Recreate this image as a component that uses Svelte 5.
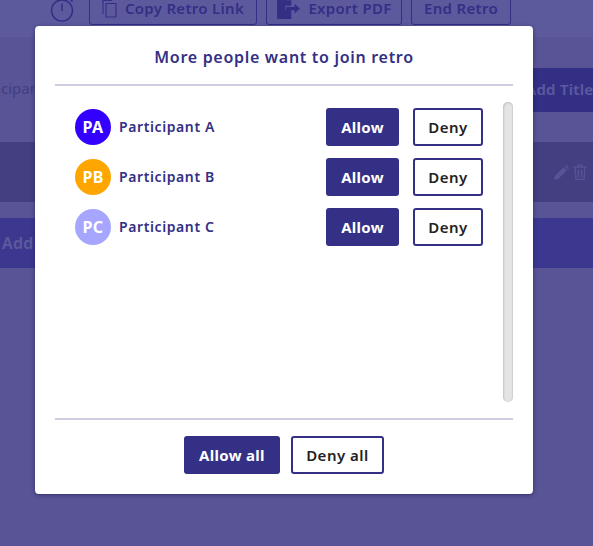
<script>
  const people = [
    { initials: 'PA', name: 'Participant A', color: '#3300ff' },
    { initials: 'PB', name: 'Participant B', color: '#ffa500' },
    { initials: 'PC', name: 'Participant C', color: '#a6a6ff' }
  ];
</script>

<div class="page">
  <header class="toolbar">
    <svg class="timer" width="24" height="24" viewBox="0 0 24 24" fill="none" stroke="#333085" stroke-width="1.5">
      <circle cx="12" cy="11.500" r="10.500" />
      <path d="M12 4.500v7.500M20.500 .5l2 2" />
    </svg>
    <div class="tool wide">
      <svg width="15" height="19" viewBox="0 0 15 19" fill="none" stroke="#333085" stroke-width="1.1">
        <path d="M1 15V1.500h9M4 4.500h10v13.500H4z" />
      </svg>
      Copy Retro Link
    </div>
    <div class="tool mid">
      <svg width="24" height="24" viewBox="0 0 22 22" fill="#333085">
        <path d="M1 0h8.500L14 4.500V9H8.500v4H14v8H1zM10 0v4h4zM9 10h8V7l5 4.500L17 16v-3H9z" />
      </svg>
      Export PDF
    </div>
    <div class="tool end">End Retro</div>
  </header>

  <section class="titlebar">
    <span class="participants">Participants</span>
    <span class="addtitle">Add Title</span>
  </section>

  <section class="darkrow">
    <svg width="15" height="15" viewBox="0 0 14 14" fill="#ffffff" fill-opacity="0.75">
      <path d="M0 14l1-4 8-8 3 3-8 8zM10 1l1-1 3 3-1 1z" />
    </svg>
    <svg width="14" height="16" viewBox="0 0 13 15" fill="none" stroke="#ffffff" stroke-opacity="0.75" stroke-width="1.2">
      <path d="M0 3h13M4.500 3V1h4v2M2 3l.7 11.400h7.600L11 3M5 5.500v7M8 5.500v7" />
    </svg>
  </section>

  <section class="addband"><span>Add Column</span></section>

  <div class="overlay">
    <div class="modal">
      <h2>More people want to join retro</h2>
      <hr />
      <div class="scroll">
        <ul>
          {#each people as p}
            <li>
              <span class="avatar" style="background:{p.color}">{p.initials}</span>
              <span class="name">{p.name}</span>
              <button class="allow">Allow</button>
              <button class="deny">Deny</button>
            </li>
          {/each}
        </ul>
        <div class="thumb"></div>
      </div>
      <hr />
      <div class="footer">
        <button class="allow all">Allow all</button>
        <button class="deny denyall">Deny all</button>
      </div>
    </div>
  </div>
</div>

<style>
  :global(body) {
    margin: 0;
    font-family: "Noto Sans", "Open Sans", sans-serif;
  }
  .page {
    position: relative;
    width: 593px;
    height: 546px;
    overflow: hidden;
    background: #ebe6da;
  }
  .toolbar {
    height: 37px;
    display: flex;
    align-items: flex-start;
    gap: 9px;
    box-sizing: border-box;
    padding-left: 50px;
    color: #333085;
    font-weight: 600;
    font-size: 15px;
    line-height: 15px;
    background: #fff;
  }
  .timer {
    margin: -1px 6px 0 0;
  }
  .tool {
    box-sizing: border-box;
    height: 35px;
    margin-top: -10px;
    padding-top: 1px;
    border: 1px solid #333085;
    border-radius: 3px;
    display: flex;
    align-items: center;
    justify-content: center;
    gap: 8px;
    letter-spacing: 0.3px;
  }
  .wide { width: 168px; }
  .mid { width: 136px; }
  .end { width: 100px; }
  .titlebar {
    height: 105px;
    position: relative;
    font-size: 15px;
  }
  .participants {
    position: absolute;
    left: -32px;
    top: 41px;
    color: #777;
  }
  .addtitle {
    position: absolute;
    right: 0;
    top: 31px;
    width: 73px;
    height: 44px;
    background: #333085;
    color: #fff;
    font-weight: 600;
    display: flex;
    align-items: center;
    padding-left: 6px;
    padding-bottom: 2px;
    box-sizing: border-box;
    white-space: nowrap;
    letter-spacing: 0.3px;
  }
  .darkrow {
    height: 60px;
    background: #837d6e;
    display: flex;
    align-items: center;
    justify-content: flex-end;
    gap: 4px;
    padding-right: 6px;
    box-sizing: border-box;
  }
  .addband {
    margin-top: 16px;
    height: 50px;
    background: #6058b7;
    color: #fff;
    font-size: 16px;
    font-weight: 600;
    display: flex;
    align-items: center;
    padding-left: 2px;
    white-space: nowrap;
    letter-spacing: 0.3px;
  }
  .overlay {
    position: absolute;
    inset: 0;
    background: rgba(51, 48, 133, 0.8);
  }
  .modal {
    position: absolute;
    left: 35px;
    top: 26px;
    width: 498px;
    height: 468px;
    box-sizing: border-box;
    background: #fff;
    border-radius: 4px;
    padding: 0 20px;
    display: flex;
    flex-direction: column;
    box-shadow: 0 1px 4px rgba(20, 15, 70, 0.5);
  }
  h2 {
    margin: 0;
    height: 58px;
    display: flex;
    align-items: center;
    justify-content: center;
    padding-top: 3px;
    box-sizing: border-box;
    font-size: 16px;
    font-weight: 600;
    color: #333085;
    letter-spacing: 0.7px;
  }
  hr {
    margin: 0;
    border: 0;
    height: 2px;
    background: #d0cde2;
    flex: none;
  }
  .scroll {
    flex: 1;
    position: relative;
    display: flex;
  }
  ul {
    list-style: none;
    margin: 0;
    padding: 22px 0 0 20px;
    flex: 1;
  }
  li {
    display: flex;
    align-items: center;
    height: 38px;
    margin-bottom: 12px;
    width: 408px;
  }
  .avatar {
    width: 36px;
    height: 36px;
    border-radius: 50%;
    color: #fff;
    font-weight: 700;
    font-size: 16px;
    letter-spacing: 0.3px;
    display: flex;
    align-items: center;
    justify-content: center;
    flex: none;
  }
  .name {
    margin-left: 8px;
    flex: 1;
    color: #333085;
    font-size: 14px;
    font-weight: 600;
    letter-spacing: 0.6px;
    padding-bottom: 2px;
  }
  button {
    font-family: inherit;
    font-size: 15px;
    font-weight: 600;
    letter-spacing: 0.5px;
    border-radius: 3px;
    box-sizing: border-box;
    height: 38px;
    padding: 0 0 1px;
    cursor: pointer;
  }
  .allow {
    width: 73px;
    background: #333085;
    color: #fff;
    border: 0;
    font-weight: 700;
    letter-spacing: 0.3px;
  }
  .deny {
    width: 70px;
    margin-left: 14px;
    background: #fff;
    color: #222;
    border: 2px solid #333085;
  }
  .thumb {
    position: absolute;
    right: 0;
    top: 16px;
    width: 10px;
    height: 300px;
    box-sizing: border-box;
    border-radius: 5px;
    background: #e4e4e4;
    box-shadow: inset 1px 1px 2px #c4c4c4, inset -1px 0 1px #d0d0d0;
  }
  .footer {
    height: 74px;
    display: flex;
    justify-content: center;
    align-items: flex-start;
    gap: 11px;
    padding-top: 16px;
    box-sizing: border-box;
  }
  .all { width: 96px; }
  .denyall { width: 93px; margin-left: 0; }
</style>
